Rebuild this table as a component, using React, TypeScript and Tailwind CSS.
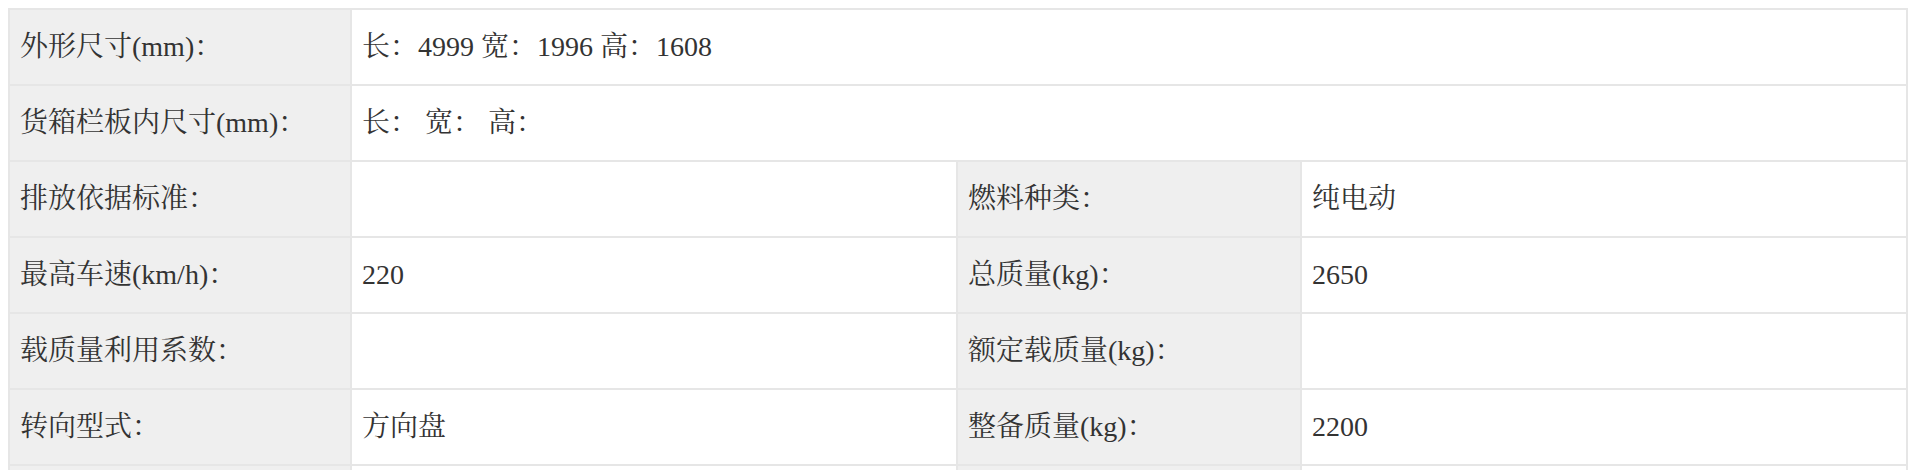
import React from "react";

const font = {
  fontFamily:
    '"Liberation Serif", "Noto Serif CJK SC", "Noto Sans CJK SC", serif',
};

type Row = [string, string] | [string, string, string, string];

const rows: Row[] = [
  ["外形尺寸(mm)：", "长：4999 宽：1996 高：1608"],
  ["货箱栏板内尺寸(mm)：", "长： 宽： 高："],
  ["排放依据标准：", "", "燃料种类：", "纯电动"],
  ["最高车速(km/h)：", "220", "总质量(kg)：", "2650"],
  ["载质量利用系数：", "", "额定载质量(kg)：", ""],
  ["转向型式：", "方向盘", "整备质量(kg)：", "2200"],
  ["", "", "", ""],
];

function Label({ children }: { children?: React.ReactNode }) {
  return (
    <div className="bg-[#efefef] h-[74px] flex items-center pl-[10px] text-[28px] text-[#333] whitespace-pre">
      {children}
    </div>
  );
}

function Value({
  children,
  wide,
}: {
  children?: React.ReactNode;
  wide?: boolean;
}) {
  return (
    <div
      className={
        "bg-white h-[74px] flex items-center pl-[10px] text-[28px] text-[#333] whitespace-pre " +
        (wide ? "col-span-3" : "")
      }
    >
      {children}
    </div>
  );
}

export default function App() {
  return (
    <div className="bg-white w-[1910px] h-[470px] overflow-hidden pt-[8px] pl-[8px]" style={font}>
      <div className="w-[1900px] bg-[#e6e6e6] p-[2px] grid grid-cols-[340px_604px_342px_604px] gap-[2px]">
        {rows.map((r, i) =>
          r.length === 2 ? (
            <React.Fragment key={i}>
              <Label>{r[0]}</Label>
              <Value wide>{r[1]}</Value>
            </React.Fragment>
          ) : (
            <React.Fragment key={i}>
              <Label>{r[0]}</Label>
              <Value>{r[1]}</Value>
              <Label>{r[2]}</Label>
              <Value>{r[3]}</Value>
            </React.Fragment>
          )
        )}
      </div>
    </div>
  );
}
